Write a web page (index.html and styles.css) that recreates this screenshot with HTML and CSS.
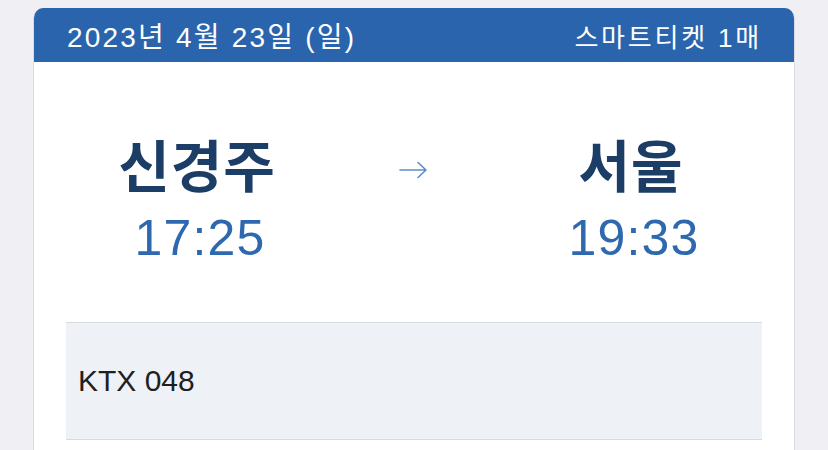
FILE: index.html
```html
<!DOCTYPE html>
<html lang="ko">
<head>
  <meta charset="UTF-8" />
  <meta name="viewport" content="width=device-width, initial-scale=1.0"/>
  <title>스마트티켓</title>
  <link rel="stylesheet" href="styles.css">
</head>
<body>

  <div class="ticket">
    <div class="ticket-header">
      <span class="date">2023년 4월 23일 (일)</span>
      <span class="count">스마트티켓 1매</span>
    </div>

    <div class="ticket-body">
      <div class="route">
        <div class="stop">
          <div class="station">신경주</div>
          <div class="time">17:25</div>
        </div>
        <div class="arrow">
          <svg width="30" height="18" viewBox="0 0 30 18">
            <path d="M1 9 H27 M19 1.5 L27 9 L19 16.5" fill="none" stroke="#5b8dc8" stroke-width="1.6" stroke-linecap="round" stroke-linejoin="round"/>
          </svg>
        </div>
        <div class="stop">
          <div class="station">서울</div>
          <div class="time">19:33</div>
        </div>
      </div>

      <div class="train-info">KTX 048</div>
    </div>
  </div>

</body>
</html>
```

FILE: styles.css
```css
body {
  margin: 0;
  background: #efeff4;
  font-family: "Liberation Sans", "Noto Sans CJK KR", sans-serif;
}
.ticket {
  margin: 8px 33px 0;
  background: white;
  border-radius: 10px 10px 0 0;
  border-left: 1px solid #dcdce1;
  border-right: 1px solid #dcdce1;
  min-height: 460px;
  overflow: hidden;
}
.ticket-header {
  height: 54px;
  background: #2a64ad;
  color: white;
  display: flex;
  justify-content: space-between;
  align-items: center;
  padding: 0 32px 0 33px;
}
.date {
  font-size: 28px;
  letter-spacing: 2.2px;
}
.count {
  font-size: 26px;
  letter-spacing: 2.8px;
}
.ticket-body {
  padding: 0 32px;
}
.route {
  display: grid;
  grid-template-columns: 1fr 172px 1fr;
  padding-top: 74px;
}
.stop {
  text-align: center;
}
.station {
  font-size: 56px;
  font-weight: bold;
  color: #1c3d66;
  line-height: 64px;
  letter-spacing: 1px;
}
.time {
  font-size: 50px;
  color: #2e69b0;
  line-height: 56px;
  margin-top: 10px;
  letter-spacing: 1.2px;
  padding-left: 6px;
}
.arrow {
  display: flex;
  justify-content: center;
  height: 64px;
  align-items: center;
  padding-top: 2px;
}
.train-info {
  margin-top: 56px;
  height: 116px;
  background: #eef1f5;
  border-top: 1px solid #d9dadd;
  border-bottom: 1px solid #d9dadd;
  display: flex;
  align-items: center;
  padding-left: 12px;
  font-size: 30px;
  color: #1f1f1f;
}
```
